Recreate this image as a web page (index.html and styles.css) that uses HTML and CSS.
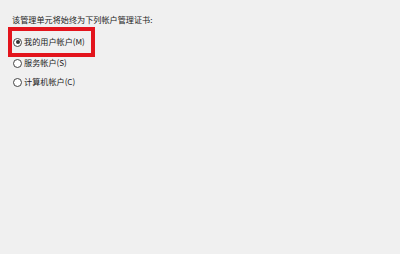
FILE: index.html
```html
<!DOCTYPE html>
<html lang="zh-CN">
<head>
<meta charset="utf-8">
<link rel="stylesheet" href="styles.css">
</head>
<body>
<div class="page">
  <div class="header">该管理单元将始终为下列帐户管理证书:</div>
  <div class="highlight">
    <label class="option"><span class="radio checked"></span><span class="label">我的用户帐户(M)</span></label>
  </div>
  <div class="options">
    <label class="option"><span class="radio"></span><span class="label">服务帐户(S)</span></label>
    <label class="option"><span class="radio"></span><span class="label">计算机帐户(C)</span></label>
  </div>
</div>
</body>
</html>
```
FILE: styles.css
```css
html, body {
  margin: 0;
  background: #f0f0f0;
}
body {
  width: 400px;
  height: 254px;
  font-family: "Noto Sans CJK SC", "Noto Sans", sans-serif;
  font-size: 8.15px;
  color: #222;
}
.page {
  padding-top: 15px;
}
.header {
  margin-left: 12px;
  line-height: 9px;
  height: 9px;
}
.highlight {
  margin-top: 3px;
  margin-left: 8px;
  width: fit-content;
  border: 4px solid #e3141c;
  padding: 0 6px 0 1px;
}
.highlight .option {
  height: 22px;
}
.options {
  display: flex;
  flex-direction: column;
  gap: 7px;
  margin-left: 13px;
}
.option {
  display: flex;
  align-items: center;
  gap: 2px;
  height: 12px;
}
.radio {
  box-sizing: border-box;
  width: 9px;
  height: 9px;
  border: 1px solid #444;
  border-radius: 50%;
  background: #fff;
  display: flex;
  align-items: center;
  justify-content: center;
  flex-shrink: 0;
}
.radio.checked::after {
  content: "";
  width: 4px;
  height: 4px;
  border-radius: 50%;
  background: #333;
}
.label {
  line-height: 12px;
  white-space: nowrap;
}
```
